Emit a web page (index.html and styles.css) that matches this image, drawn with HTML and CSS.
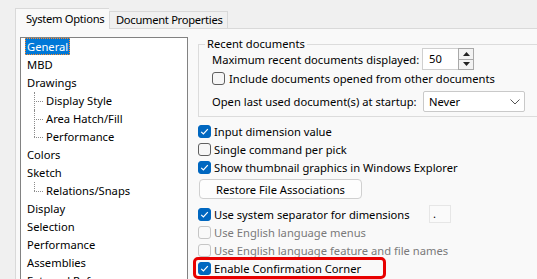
FILE: index.html
```html
<!DOCTYPE html>
<html lang="en">
<head>
    <meta charset="UTF-8">
    <meta name="viewport" content="width=device-width, initial-scale=1.0">
    <title>System Options - General</title>
    <link rel="stylesheet" href="styles.css">
</head>
<body>
    <div class="window">
        <div class="tabs">
            <div class="tab active">System Options</div>
            <div class="tab">Document Properties</div>
        </div>
        <div class="panel">
            <ul class="tree">
                <li class="item"><span class="label selected">General</span></li>
                <li class="item"><span class="label">MBD</span></li>
                <li class="item"><span class="label">Drawings</span></li>
                <li class="item child"><span class="label">Display Style</span></li>
                <li class="item child"><span class="label">Area Hatch/Fill</span></li>
                <li class="item child last"><span class="label">Performance</span></li>
                <li class="item"><span class="label">Colors</span></li>
                <li class="item"><span class="label">Sketch</span></li>
                <li class="item child last"><span class="label">Relations/Snaps</span></li>
                <li class="item"><span class="label">Display</span></li>
                <li class="item"><span class="label">Selection</span></li>
                <li class="item"><span class="label">Performance</span></li>
                <li class="item"><span class="label">Assemblies</span></li>
                <li class="item"><span class="label">External References</span></li>
            </ul>

            <div class="options">
                <fieldset class="group">
                    <legend>Recent documents</legend>
                    <div class="row row-spin">
                        <span class="field-label">Maximum recent documents displayed:</span>
                        <div class="spin">
                            <span class="spin-value">50</span>
                            <div class="spin-btns">
                                <span class="spin-btn"><svg width="7" height="4" viewBox="0 0 7 4"><polygon points="3.5,0 7,4 0,4" fill="#222"/></svg></span>
                                <span class="spin-btn"><svg width="7" height="4" viewBox="0 0 7 4"><polygon points="0,0 7,0 3.5,4" fill="#222"/></svg></span>
                            </div>
                        </div>
                    </div>
                    <label class="check in-group">
                        <span class="box"></span>
                        Include documents opened from other documents
                    </label>
                    <div class="row row-select">
                        <span class="field-label">Open last used document(s) at startup:</span>
                        <div class="select">
                            <span>Never</span>
                            <svg class="chevron" width="10" height="6" viewBox="0 0 10 6"><polyline points="0.5,0.5 5,5 9.5,0.5" fill="none" stroke="#555" stroke-width="1"/></svg>
                        </div>
                    </div>
                </fieldset>

                <label class="check first">
                    <span class="box checked"><svg width="13" height="13" viewBox="0 0 13 13"><polyline points="3.2,6.8 5.4,9 9.8,4.2" fill="none" stroke="#fff" stroke-width="1.2"/></svg></span>
                    Input dimension value
                </label>
                <label class="check">
                    <span class="box"></span>
                    Single command per pick
                </label>
                <label class="check">
                    <span class="box checked"><svg width="13" height="13" viewBox="0 0 13 13"><polyline points="3.2,6.8 5.4,9 9.8,4.2" fill="none" stroke="#fff" stroke-width="1.2"/></svg></span>
                    Show thumbnail graphics in Windows Explorer
                </label>
                <button type="button" class="btn">Restore File Associations</button>
                <div class="check-row sep-row">
                    <label class="check">
                        <span class="box checked"><svg width="13" height="13" viewBox="0 0 13 13"><polyline points="3.2,6.8 5.4,9 9.8,4.2" fill="none" stroke="#fff" stroke-width="1.2"/></svg></span>
                        Use system separator for dimensions
                    </label>
                    <span class="sep-box">.</span>
                </div>
                <label class="check disabled">
                    <span class="box"></span>
                    Use English language menus
                </label>
                <label class="check disabled">
                    <span class="box"></span>
                    Use English language feature and file names
                </label>
                <label class="check highlight">
                    <span class="box checked"><svg width="13" height="13" viewBox="0 0 13 13"><polyline points="3.2,6.8 5.4,9 9.8,4.2" fill="none" stroke="#fff" stroke-width="1.2"/></svg></span>
                    Enable Confirmation Corner
                </label>
            </div>
        </div>
    </div>
</body>
</html>
```

FILE: styles.css
```css
html, body {
    margin: 0;
    padding: 0;
}
body {
    width: 537px;
    height: 279px;
    overflow: hidden;
    background-color: #f0f0f0;
    font-family: "Noto Sans", "Open Sans", sans-serif;
    font-size: 11.2px;
    color: #000;
}
.window {
    padding: 8px 0 0 15px;
    height: 271px;
    display: flex;
    flex-direction: column;
    overflow: hidden;
}
.tabs {
    display: flex;
    align-items: flex-end;
    height: 20px;
    letter-spacing: -0.3px;
}
.tab {
    box-sizing: border-box;
    height: 17px;
    line-height: 16px;
    padding: 0 4px 0 6px;
    border: 1px solid #d9d9d9;
    border-bottom: none;
    background-color: #f0f0f0;
    white-space: nowrap;
}
.tab.active {
    height: 21px;
    line-height: 19px;
    width: 94px;
    padding: 0 0 0 10px;
    margin-bottom: -1px;
    background-color: #f9f9f9;
    position: relative;
    z-index: 1;
    border-right: none;
}
.panel {
    flex: 1;
    display: flex;
    width: 700px;
    padding: 8px 0 0 4px;
    border-top: 1px solid #d9d9d9;
    border-left: 1px solid #d9d9d9;
    background-color: #f9f9f9;
}

/* Tree */
.tree {
    box-sizing: border-box;
    width: 168px;
    height: 260px;
    margin: 0;
    padding: 0 0 0 4px;
    list-style: none;
    background: #fff;
    border: 1px solid #828282;
    overflow: hidden;
    flex-shrink: 0;
}
.item {
    position: relative;
    height: 18px;
    line-height: 17px;
    white-space: nowrap;
}
.item .label {
    display: inline-block;
    box-sizing: border-box;
    height: 17px;
    padding: 0 1px;
    border: 1px solid transparent;
    line-height: 15px;
}
.item .label.selected {
    background-color: #0078d7;
    color: #fff;
    border: 1px dotted #ff8a2a;
}
.item.child {
    padding-left: 19px;
}
.item.child::before {
    content: "";
    position: absolute;
    left: 9px;
    top: 9px;
    width: 9px;
    border-top: 1px dotted #8c8c8c;
}
.item.child::after {
    content: "";
    position: absolute;
    left: 9px;
    top: 0;
    height: 18px;
    border-left: 1px dotted #8c8c8c;
}
.item.child.last::after {
    height: 9px;
}

/* Options */
.options {
    margin-left: 10px;
    display: flex;
    flex-direction: column;
    align-items: flex-start;
}
.group {
    box-sizing: border-box;
    width: 420px;
    margin: 0;
    padding: 0 0 4px 13px;
    border: 1px solid #dcdcdc;
    border-right: none;
}
.group legend {
    padding: 0 2px;
    margin-left: -7px;
    line-height: 14px;
}
.row {
    display: flex;
    align-items: center;
}
.field-label {
    width: 210px;
    flex-shrink: 0;
    white-space: nowrap;
}
.row-spin {
    height: 22px;
    margin-top: -3px;
}
.spin {
    display: flex;
    height: 22px;
}
.spin-value {
    box-sizing: border-box;
    width: 36px;
    padding-left: 6px;
    line-height: 20px;
    background: #fff;
    border: 1px solid #cfcfcf;
    border-right: none;
}
.spin-btns {
    display: flex;
    flex-direction: column;
    width: 16px;
    border: 1px solid #a9a9a9;
    box-sizing: border-box;
}
.spin-btn {
    flex: 1;
    display: flex;
    align-items: center;
    justify-content: center;
    background: #f3f3f3;
}
.spin-btn + .spin-btn {
    border-top: 1px solid #a9a9a9;
}
.row-select {
    height: 21px;
    margin-top: 5px;
}
.select {
    box-sizing: border-box;
    width: 102px;
    height: 21px;
    margin-left: 1px;
    padding: 0 4px 0 5px;
    display: flex;
    align-items: center;
    justify-content: space-between;
    background: #fff;
    border: 1px solid #c9c9c9;
    border-radius: 2px;
}

/* Checkboxes */
.check {
    display: flex;
    align-items: center;
    gap: 3px;
    height: 18px;
    white-space: nowrap;
}
.check.in-group {
    height: 16px;
    gap: 4px;
}
.check.first {
    margin-top: 5px;
}
.box {
    box-sizing: border-box;
    width: 13px;
    height: 13px;
    border: 1px solid #5f5f5f;
    border-radius: 3px;
    background: #f6f6f6;
    flex-shrink: 0;
    display: flex;
}
.box.checked {
    background: #0067c0;
    border-color: #0067c0;
}
.box svg {
    margin: -1px;
}
.check.disabled {
    color: #7a7a7a;
}
.check.disabled .box {
    border-color: #c6c6c6;
    background: #f9f9f9;
}
.btn {
    box-sizing: border-box;
    width: 163px;
    height: 20px;
    margin: 3px 0 0 1px;
    padding: 0;
    font: inherit;
    color: #000;
    background: #fdfdfd;
    border: 1px solid #d0d0d0;
    border-radius: 4px;
}
.check-row.sep-row {
    display: grid;
    grid-template-columns: 231px 22px;
    align-items: center;
    margin-top: 6px;
}
.sep-box {
    box-sizing: border-box;
    height: 18px;
    padding-left: 3px;
    line-height: 16px;
    border: 1px solid #e6e6e6;
    background: #fafafa;
}
.check.highlight {
    box-sizing: border-box;
    height: 22px;
    width: 193px;
    margin: -2px 0 0 -5px;
    padding-left: 2px;
    border: 3px solid #e80000;
    border-radius: 5px;
}
```
